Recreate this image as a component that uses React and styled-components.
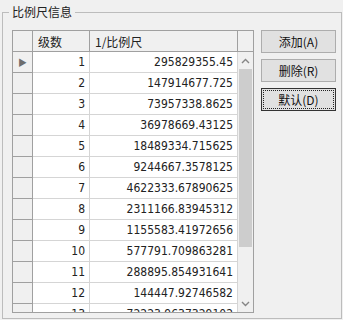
import React from "react";
import styled, { createGlobalStyle } from "styled-components";

const GlobalStyle = createGlobalStyle`
  html, body {
    margin: 0;
    padding: 0;
    background: #f0f0f0;
  }
  body {
    font-family: "Noto Sans CJK SC", "DejaVu Sans", sans-serif;
    font-size: 12px;
    color: #000;
  }
`;

const Page = styled.div`
  width: 343px;
  height: 320px;
  background: #f0f0f0;
  overflow: hidden;
  padding: 12px 2px 1px 2px;
  box-sizing: border-box;
`;

const GroupBox = styled.fieldset`
  margin: 0;
  height: 100%;
  box-sizing: border-box;
  border: 1px solid #bcbcbc;
  border-radius: 0;
  padding: 17px 5px 0 9px;
  display: flex;
  align-items: flex-start;
  gap: 7px;
  position: relative;
`;

const Legend = styled.legend`
  position: absolute;
  top: -10px;
  left: 6px;
  padding: 0 3px;
  background: #f0f0f0;
  font-size: 12px;
  line-height: 18px;
  color: #222;
`;

const Grid = styled.div`
  width: 242px;
  height: 283px;
  border: 1px solid #a0a0a0;
  box-sizing: border-box;
  display: flex;
  overflow: hidden;
  background: #f0f0f0;
`;

const Table = styled.div`
  flex: 1;
  display: grid;
  grid-template-columns: 20px 57px 148px;
  grid-auto-rows: 21px;
  align-content: start;
`;

const HeaderCell = styled.div`
  box-sizing: border-box;
  border-right: 1px solid #a0a0a0;
  border-bottom: 1px solid #a0a0a0;
  background: #f0f0f0;
  padding-left: 5px;
  display: flex;
  align-items: center;
  color: #222;
`;

const RowHead = styled.div`
  box-sizing: border-box;
  border-right: 1px solid #a0a0a0;
  border-bottom: 1px solid #a0a0a0;
  background: #f0f0f0;
  display: flex;
  align-items: center;
  justify-content: center;
  color: #6d6d6d;
  font-size: 9px;
`;

const Cell = styled.div`
  box-sizing: border-box;
  background: #fff;
  border-right: 1px solid #d5d5d5;
  border-bottom: 1px solid #d5d5d5;
  display: flex;
  align-items: center;
  justify-content: flex-end;
  padding-right: 4px;
  font-family: "DejaVu Sans Condensed", "DejaVu Sans", sans-serif;
  font-size: 12px;
  color: #222;
  white-space: nowrap;
  overflow: hidden;
`;

const ScrollCol = styled.div`
  width: 17px;
  display: flex;
  flex-direction: column;
`;

const ScrollHead = styled.div`
  height: 21px;
  box-sizing: border-box;
  border-bottom: 1px solid #a0a0a0;
  background: #f0f0f0;
`;

const ScrollTrack = styled.div`
  flex: 1;
  display: flex;
  flex-direction: column;
  background: #f0f0f0;
`;

const Arrow = styled.div`
  height: 17px;
  display: flex;
  align-items: center;
  justify-content: center;
  color: #858585;
`;

const Thumb = styled.div`
  margin: 0 1px;
  height: ${(p) => p.size}px;
  background: #cdcdcd;
`;

const Spacer = styled.div`
  flex: 1;
`;

const Buttons = styled.div`
  display: flex;
  flex-direction: column;
  gap: 6px;
`;

const Button = styled.button`
  width: 75px;
  height: 23px;
  box-sizing: border-box;
  background: #e1e1e1;
  border: 1px solid ${(p) => (p.focus ? "#333" : "#adadad")};
  font-family: "Noto Sans CJK SC", "DejaVu Sans", sans-serif;
  font-size: 12px;
  color: #111;
  padding: 0;
  position: relative;
  &::after {
    content: "";
    display: ${(p) => (p.focus ? "block" : "none")};
    position: absolute;
    inset: 1px;
    border: 1px dotted #222;
  }
`;

const rows = [
  "295829355.45",
  "147914677.725",
  "73957338.8625",
  "36978669.43125",
  "18489334.715625",
  "9244667.3578125",
  "4622333.67890625",
  "2311166.83945312",
  "1155583.41972656",
  "577791.709863281",
  "288895.854931641",
  "144447.92746582",
  "72223.9637329102",
];

const Chevron = ({ up }) => (
  <svg width="9" height="6" viewBox="0 0 9 6">
    <path
      d={up ? "M1 5 L4.5 1.5 L8 5" : "M1 1 L4.5 4.5 L8 1"}
      fill="none"
      stroke="currentColor"
      strokeWidth="1.4"
    />
  </svg>
);

export default function App() {
  return (
    <>
      <GlobalStyle />
      <Page>
        <GroupBox>
          <Legend>比例尺信息</Legend>
          <Grid>
            <Table>
              <HeaderCell />
              <HeaderCell>级数</HeaderCell>
              <HeaderCell>1/比例尺</HeaderCell>
              {rows.map((v, i) => (
                <React.Fragment key={i}>
                  <RowHead>{i === 0 ? "▶" : ""}</RowHead>
                  <Cell>{i + 1}</Cell>
                  <Cell>{v}</Cell>
                </React.Fragment>
              ))}
            </Table>
            <ScrollCol>
              <ScrollHead />
              <ScrollTrack>
                <Arrow>
                  <Chevron up />
                </Arrow>
                <Thumb size={178} />
                <Spacer />
                <Arrow>
                  <Chevron />
                </Arrow>
              </ScrollTrack>
            </ScrollCol>
          </Grid>
          <Buttons>
            <Button>添加(A)</Button>
            <Button>删除(R)</Button>
            <Button focus>默认(D)</Button>
          </Buttons>
        </GroupBox>
      </Page>
    </>
  );
}
